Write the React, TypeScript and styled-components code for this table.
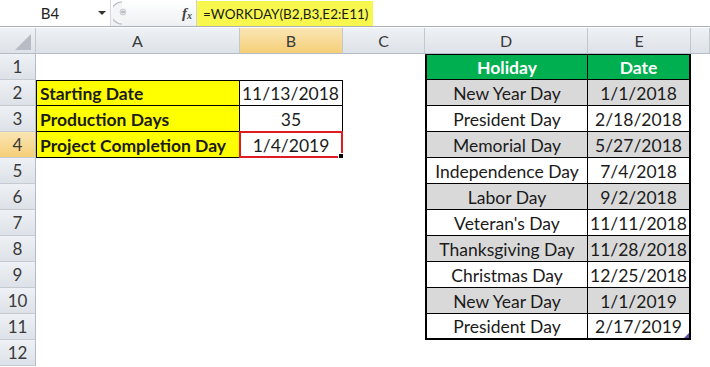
import styled, { createGlobalStyle, css } from "styled-components";

type Fill = "none" | "yellow" | "grey" | "green";
type Align = "left" | "center" | "right";

interface CellData {
  text?: string;
  fill?: Fill;
  bold?: boolean;
  align?: Align;
  boxed?: boolean;
  top?: boolean;
  left?: boolean;
  outerLeft?: boolean;
  outerRight?: boolean;
  outerBottom?: boolean;
  selected?: boolean;
}

const columns = ["A", "B", "C", "D", "E", ""];
const selectedCol = "B";
const selectedRow = 4;

const holidays: [string, string][] = [
  ["New Year Day", "1/1/2018"],
  ["President Day", "2/18/2018"],
  ["Memorial Day", "5/27/2018"],
  ["Independence Day", "7/4/2018"],
  ["Labor Day", "9/2/2018"],
  ["Veteran's Day", "11/11/2018"],
  ["Thanksgiving Day", "11/28/2018"],
  ["Christmas Day", "12/25/2018"],
  ["New Year Day", "1/1/2019"],
  ["President Day", "2/17/2019"],
];

const inputs: [string, string, Align][] = [
  ["Starting Date", "11/13/2018", "right"],
  ["Production Days", "35", "center"],
  ["Project Completion Day", "1/4/2019", "center"],
];

function buildRows(): CellData[][] {
  const rows: CellData[][] = [];
  for (let r = 1; r <= 12; r++) {
    const row: CellData[] = [{}, {}, {}, {}, {}, {}];
    const input = inputs[r - 2];
    if (input) {
      row[0] = { text: input[0], fill: "yellow", bold: true, align: "left", boxed: true, left: true, top: r === 2 };
      row[1] = { text: input[1], align: input[2], boxed: true, top: r === 2, selected: r === selectedRow };
    }
    if (r === 1) {
      row[3] = { text: "Holiday", fill: "green", bold: true, boxed: true, top: true, outerLeft: true };
      row[4] = { text: "Date", fill: "green", bold: true, boxed: true, top: true, outerRight: true };
    } else if (r <= 11) {
      const [name, date] = holidays[r - 2];
      const fill: Fill = r % 2 === 0 ? "grey" : "none";
      const last = r === 11;
      row[3] = { text: name, fill, boxed: true, outerLeft: true, outerBottom: last };
      row[4] = { text: date, fill, boxed: true, outerRight: true, outerBottom: last };
    }
    rows.push(row);
  }
  return rows;
}

const fills: Record<Fill, string> = {
  none: "#ffffff",
  yellow: "#ffff00",
  grey: "#d9d9d9",
  green: "#00b050",
};

function App() {
  const rows = buildRows();
  return (
    <>
      <GlobalStyle />
      <Window>
        <FormulaBar>
          <NameBox>
            <NameText>B4</NameText>
            <DropArrow />
          </NameBox>
          <ToolStrip>
            <Splitter width="16" height="24" viewBox="0 0 16 24">
              <path d="M9 1 A11 11 0 0 0 9 23" fill="#f4f5f7" stroke="#b9bec6" strokeWidth="1.2" />
              <rect x="7" y="8" width="6" height="6" rx="3" fill="#dfe2e6" stroke="#c3c7cd" strokeWidth="0.8" />
              <line x1="8.3" y1="11" x2="11.7" y2="11" stroke="#8d939b" strokeWidth="1" />
            </Splitter>
            <Fx>
              f<sub>x</sub>
            </Fx>
          </ToolStrip>
          <FormulaInput>
            <Highlight>=WORKDAY(B2,B3,E2:E11)</Highlight>
          </FormulaInput>
        </FormulaBar>
        <Sheet>
          <Corner>
            <svg width="16" height="16" viewBox="0 0 16 16">
              <polygon points="16,0 16,16 0,16" fill="#b7bcc4" />
            </svg>
          </Corner>
          {columns.map((c, i) => (
            <ColHeader key={i} active={c === selectedCol}>
              {c}
            </ColHeader>
          ))}
          {rows.map((row, ri) => (
            <RowGroup key={ri}>
              <RowHeader active={ri + 1 === selectedRow}>{ri + 1}</RowHeader>
              {row.map((cell, ci) => (
                <Cell
                  key={ci}
                  fill={cell.fill ?? "none"}
                  bold={!!cell.bold}
                  align={cell.align ?? "center"}
                  boxed={!!cell.boxed}
                  top={!!cell.top}
                  left={!!cell.left}
                  outerLeft={!!cell.outerLeft}
                  outerRight={!!cell.outerRight}
                  outerBottom={!!cell.outerBottom}
                  light={cell.fill === "green"}
                >
                  {cell.text}
                  {cell.selected && (
                    <Selection>
                      <FillHandle />
                    </Selection>
                  )}
                  {ri === 10 && ci === 4 && <Corner2 />}
                </Cell>
              ))}
            </RowGroup>
          ))}
        </Sheet>
      </Window>
    </>
  );
}

export default App;

const GlobalStyle = createGlobalStyle`
  html, body {
    margin: 0;
    padding: 0;
    background: #ffffff;
    overflow: hidden;
  }
  body {
    font-family: Lato, "Liberation Sans", sans-serif;
    color: #1b1b1b;
  }
`;

const Window = styled.div`
  width: 710px;
  height: 367px;
  overflow: hidden;
  display: flex;
  flex-direction: column;
`;

const FormulaBar = styled.div`
  height: 26px;
  display: flex;
  border-bottom: 1px solid #a9b0b9;
  background: #ffffff;
`;

const NameBox = styled.div`
  width: 110px;
  display: flex;
  align-items: center;
  border-right: 1px solid #d6dae0;
`;

const NameText = styled.span`
  flex: 1;
  text-align: center;
  font-size: 15px;
  color: #222;
  padding-left: 2px;
`;

const DropArrow = styled.span`
  width: 0;
  height: 0;
  margin-right: 4px;
  border-left: 4px solid transparent;
  border-right: 4px solid transparent;
  border-top: 4px solid #333;
`;

const ToolStrip = styled.div`
  width: 86px;
  display: flex;
  align-items: center;
  justify-content: space-between;
  padding: 0 4px 0 2px;
  box-sizing: border-box;
  background: linear-gradient(#ffffff, #eef0f3);
  border-right: 1px solid #d0d4da;
`;

const Splitter = styled.svg`
  display: block;
`;

const Fx = styled.span`
  font-family: "Liberation Serif", serif;
  font-style: italic;
  font-weight: bold;
  font-size: 15px;
  color: #444;
  sub {
    font-size: 10px;
    vertical-align: -1px;
  }
`;

const FormulaInput = styled.div`
  flex: 1;
  display: flex;
  align-items: stretch;
  padding-top: 1px;
`;

const Highlight = styled.span`
  display: flex;
  align-items: center;
  background: #f7f74d;
  padding: 0 5px 0 6px;
  font-size: 13.5px;
  color: #1b1b1b;
`;

const Sheet = styled.div`
  margin-top: 1px;
  display: grid;
  grid-template-columns: 36px 204px 103px 82px 163px 103px 1fr;
  grid-template-rows: 26px repeat(12, 26px);
`;

const RowGroup = styled.div`
  display: contents;
`;

const headerBg = css<{ active: boolean }>`
  background: ${(p) =>
    p.active
      ? "linear-gradient(#fae5b4, #f5cf78)"
      : "linear-gradient(#eef1f5, #dde2e8)"};
  color: #3a3a3a;
  font-size: 16px;
  display: flex;
  align-items: center;
  justify-content: center;
  box-sizing: border-box;
`;

const Corner = styled.div`
  background: linear-gradient(#eef1f5, #dde2e8);
  border-right: 1px solid #c3c8cf;
  border-bottom: 1px solid #b5bcc6;
  display: flex;
  align-items: flex-end;
  justify-content: flex-end;
  padding: 0 4px 3px 0;
  box-sizing: border-box;
`;

const ColHeader = styled.div<{ active: boolean }>`
  ${headerBg}
  border-right: 1px solid #c3c8cf;
  border-bottom: 1px solid #b5bcc6;
`;

const RowHeader = styled.div<{ active: boolean }>`
  ${headerBg}
  border-right: 1px solid #b5bcc6;
  border-bottom: 1px solid #c6cbd2;
  font-size: 17px;
`;

const Cell = styled.div<{
  fill: Fill;
  bold: boolean;
  align: Align;
  boxed: boolean;
  top: boolean;
  left: boolean;
  outerLeft: boolean;
  outerRight: boolean;
  outerBottom: boolean;
  light: boolean;
}>`
  position: relative;
  box-sizing: border-box;
  display: flex;
  align-items: center;
  justify-content: ${(p) =>
    p.align === "left" ? "flex-start" : p.align === "right" ? "flex-end" : "center"};
  padding: 1px 3px 0;
  background: ${(p) => fills[p.fill]};
  font-size: 17.5px;
  font-weight: ${(p) => (p.bold ? 700 : 400)};
  color: ${(p) => (p.light ? "#ffffff" : "#1b1b1b")};
  white-space: nowrap;
  ${(p) =>
    p.boxed &&
    css`
      border-right: ${p.outerRight ? 2 : 1}px solid #000;
      border-bottom: ${p.outerBottom ? 2 : 1}px solid #000;
      border-left: ${p.outerLeft ? "2px solid #000" : p.left ? "1px solid #000" : "none"};
      border-top: ${p.top ? "1px solid #000" : "none"};
    `}
`;

const Selection = styled.div`
  position: absolute;
  left: -1px;
  top: -1px;
  right: -1px;
  bottom: -1px;
  border: 2px solid #e01b1f;
  pointer-events: none;
`;

const FillHandle = styled.div`
  position: absolute;
  right: -4px;
  bottom: -4px;
  width: 5px;
  height: 5px;
  background: #000;
  border: 1px solid #fff;
`;

const Corner2 = styled.div`
  position: absolute;
  right: 0;
  bottom: 0;
  width: 0;
  height: 0;
  border-left: 5px solid transparent;
  border-bottom: 5px solid #5552a8;
`;
